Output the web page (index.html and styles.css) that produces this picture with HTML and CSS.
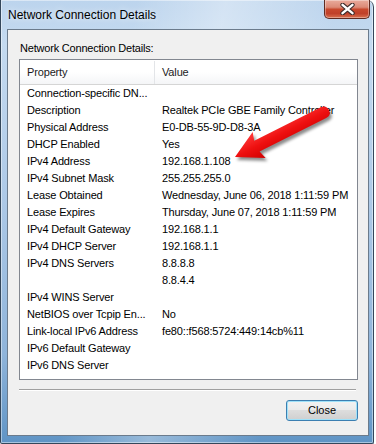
FILE: index.html
```html
<!DOCTYPE html>
<html>
<head>
<meta charset="utf-8">
<link rel="stylesheet" href="styles.css">
</head>
<body>
<div class="window">
  <div class="titlebar">
    <span class="title">Network Connection Details</span>
    <div class="xbtn">
      <svg width="15" height="12" viewBox="0 0 15 12">
        <path d="M2.5 1.8 L12.5 10.2 M12.5 1.8 L2.5 10.2" stroke="#3b2b2a" stroke-width="4.4" stroke-linecap="round"/>
        <path d="M2.5 1.8 L12.5 10.2 M12.5 1.8 L2.5 10.2" stroke="#ffffff" stroke-width="2.4" stroke-linecap="round"/>
      </svg>
    </div>
  </div>
  <div class="client">
    <div class="label">Network Connection Details:</div>
    <div class="list">
      <div class="row head"><span>Property</span><span>Value</span></div>
      <div class="row"><span>Connection-specific DN...</span><span></span></div>
      <div class="row"><span>Description</span><span>Realtek PCIe GBE Family Controller</span></div>
      <div class="row"><span>Physical Address</span><span>E0-DB-55-9D-D8-3A</span></div>
      <div class="row"><span>DHCP Enabled</span><span>Yes</span></div>
      <div class="row"><span>IPv4 Address</span><span>192.168.1.108</span></div>
      <div class="row"><span>IPv4 Subnet Mask</span><span>255.255.255.0</span></div>
      <div class="row"><span>Lease Obtained</span><span>Wednesday, June 06, 2018 1:11:59 PM</span></div>
      <div class="row"><span>Lease Expires</span><span>Thursday, June 07, 2018 1:11:59 PM</span></div>
      <div class="row"><span>IPv4 Default Gateway</span><span>192.168.1.1</span></div>
      <div class="row"><span>IPv4 DHCP Server</span><span>192.168.1.1</span></div>
      <div class="row"><span>IPv4 DNS Servers</span><span>8.8.8.8</span></div>
      <div class="row"><span></span><span>8.8.4.4</span></div>
      <div class="row"><span>IPv4 WINS Server</span><span></span></div>
      <div class="row"><span>NetBIOS over Tcpip En...</span><span>No</span></div>
      <div class="row"><span>Link-local IPv6 Address</span><span>fe80::f568:5724:449:14cb%11</span></div>
      <div class="row"><span>IPv6 Default Gateway</span><span></span></div>
      <div class="row"><span>IPv6 DNS Server</span><span></span></div>
    </div>
    <div class="sep"></div>
    <div class="actions"><button class="btn">Close</button></div>
  </div>
  <svg class="arrow" width="376" height="444" viewBox="0 0 376 444">
    <defs>
      <linearGradient id="ag" x1="0" y1="0" x2="0" y2="1">
        <stop offset="0" stop-color="#ff3b3b"/>
        <stop offset="0.5" stop-color="#ee1010"/>
        <stop offset="1" stop-color="#d00000"/>
      </linearGradient>
    </defs>
    <g transform="translate(235,157) rotate(-26.6)">
      <path d="M0 0 L27 -14.5 L24.5 -6 L99 -6 Q105 -6 105 0 Q105 6 99 6 L24.5 6 L27 14.5 Z" fill="url(#ag)"/>
    </g>
  </svg>
</div>
</body>
</html>
```
FILE: styles.css
```css
html, body {
  margin: 0;
  padding: 0;
}

body {
  width: 376px;
  height: 444px;
  overflow: hidden;
  background: #ffffff;
  font-family: "Liberation Sans", Arial, sans-serif;
  color: #000;
}

.window {
  position: relative;
  width: 374px;
  height: 444px;
  box-sizing: border-box;
  border: 1px solid #34475b;
  border-top: none;
  border-radius: 0 7px 2px 2px;
  background:
    linear-gradient(100deg, rgba(255,255,255,0) 30%, rgba(255,255,255,0.35) 50%, rgba(255,255,255,0) 75%),
    linear-gradient(180deg, #bcd4ed 0%, #c4daf0 10%, #adc9e7 45%, #8fb4da 80%, #5f94c5 100%);
  box-shadow: inset 0 0 0 1px rgba(255,255,255,0.45);
  display: flex;
  flex-direction: column;
}

.titlebar {
  height: 29px;
  flex: none;
  display: flex;
  align-items: flex-start;
}

.title {
  margin: 7px 0 0 7px;
  font-size: 12px;
  line-height: 16px;
  color: #000;
  text-shadow: 0 0 6px rgba(255,255,255,0.9);
}

.xbtn {
  margin-left: auto;
  margin-right: 3px;
  width: 46px;
  height: 19px;
  box-sizing: border-box;
  border: 1px solid #5f2b22;
  border-top: none;
  border-radius: 0 0 5px 5px;
  background: linear-gradient(180deg, #e9ab9c 0%, #dc8a77 40%, #c8482d 52%, #c0412a 75%, #d9704f 100%);
  box-shadow: inset 0 0 0 1px rgba(255,255,255,0.35);
  display: flex;
  align-items: center;
  justify-content: center;
}

.client {
  flex: 1;
  margin: 0 4px 7px 6px;
  box-sizing: border-box;
  border: 1px solid #6b7b8c;
  background: #f0f0f0;
  padding: 11px 10px 0 11px;
  display: flex;
  flex-direction: column;
}

.label {
  font-size: 11px;
  line-height: 15px;
  letter-spacing: -0.2px;
  padding-left: 1px;
}

.list {
  margin-top: 3px;
  height: 321px;
  flex: none;
  box-sizing: border-box;
  border: 1px solid #828790;
  background: #fff;
  overflow: hidden;
}

.row {
  display: grid;
  grid-template-columns: 135px 1fr;
  height: 17px;
  line-height: 17px;
  font-size: 11px;
  letter-spacing: -0.15px;
  white-space: nowrap;
}

.row span {
  padding-left: 7px;
  overflow: hidden;
}

.head {
  height: 25px;
  line-height: 23px;
  padding-top: 1px;
  box-sizing: border-box;
  border-bottom: 1px solid #d5d5d5;
  background: linear-gradient(180deg, #ffffff 0%, #ffffff 50%, #f4f5f7 100%);
  color: #1b1b1b;
}

.head span:first-child {
  border-right: 1px solid #e3e5e8;
}

.sep {
  margin-top: 9px;
  margin-right: 2px;
  height: 0;
  border-top: 1px solid #a0a0a0;
  border-bottom: 1px solid #ffffff;
}

.actions {
  display: flex;
  justify-content: flex-end;
  margin-top: 9px;
}

.btn {
  width: 72px;
  height: 21px;
  box-sizing: border-box;
  margin: 0;
  padding: 0;
  border: 1px solid #3c7fb1;
  border-radius: 3px;
  background: linear-gradient(180deg, #f2f2f2 0%, #ebebeb 45%, #dddddd 50%, #cfcfcf 100%);
  box-shadow: inset 0 0 0 1px #9fe1f9;
  font-family: "Liberation Sans", Arial, sans-serif;
  font-size: 11px;
  line-height: 19px;
  color: #000;
}

.arrow {
  position: absolute;
  left: -1px;
  top: 0;
  pointer-events: none;
  filter: drop-shadow(2px 3px 1.5px rgba(0,0,0,0.45));
}
```
